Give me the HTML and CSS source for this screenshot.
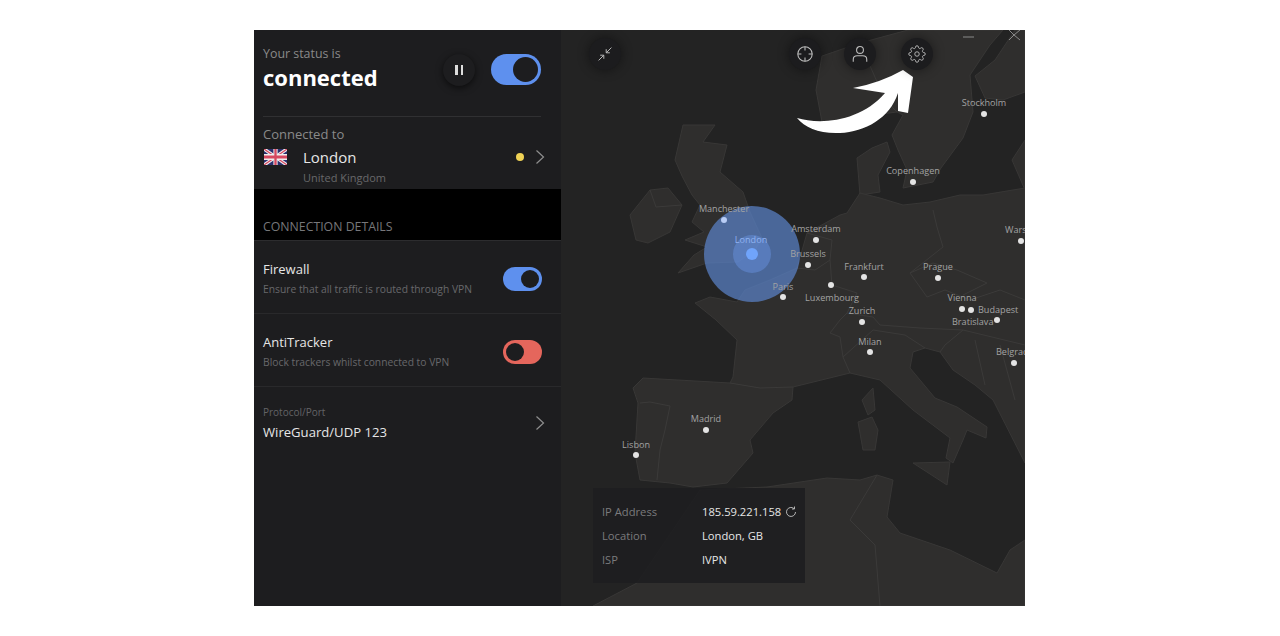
FILE: index.html
```html
<!DOCTYPE html>
<html lang="en">
<head>
  <meta charset="UTF-8" />
  <title>IVPN - connected</title>
  <link rel="stylesheet" href="styles.css">
</head>
<body>

<div class="window">

  <!-- Left panel -->
  <div class="panel">
    <div class="status">
      <div class="status-inner">
        <div class="status-text">
          <div class="status-small">Your status is</div>
          <div class="status-big">connected</div>
        </div>
        <div class="pause-btn"><span></span><span></span></div>
        <div class="toggle toggle-big"><div class="knob"></div></div>
      </div>
    </div>

    <div class="server">
      <div class="server-label">Connected to</div>
      <div class="server-row">
        <svg class="flag" viewBox="0 0 60 30" preserveAspectRatio="none">
          <rect width="60" height="30" fill="#2a2f6e"/>
          <path d="M0 0L60 30M60 0L0 30" stroke="#eee" stroke-width="7"/>
          <path d="M0 0L60 30M60 0L0 30" stroke="#d6485f" stroke-width="2.5"/>
          <path d="M30 0V30M0 15H60" stroke="#eee" stroke-width="11"/>
          <path d="M30 0V30M0 15H60" stroke="#d6485f" stroke-width="6"/>
        </svg>
        <div class="server-city">London</div>
        <div class="yellow-dot"></div>
        <svg class="chevron" viewBox="0 0 10 16"><path d="M1.5 1.5L8.5 8L1.5 14.5"/></svg>
      </div>
      <div class="server-country">United Kingdom</div>
    </div>

    <div class="band">CONNECTION DETAILS</div>

    <div class="detail-row">
      <div>
        <div class="detail-title">Firewall</div>
        <div class="detail-desc">Ensure that all traffic is routed through VPN</div>
      </div>
      <div class="toggle"><div class="knob"></div></div>
    </div>

    <div class="detail-row">
      <div>
        <div class="detail-title">AntiTracker</div>
        <div class="detail-desc">Block trackers whilst connected to VPN</div>
      </div>
      <div class="toggle toggle-red"><div class="knob"></div></div>
    </div>

    <div class="protocol">
      <div>
        <div class="protocol-label">Protocol/Port</div>
        <div class="detail-title">WireGuard/UDP 123</div>
      </div>
      <svg class="chevron" viewBox="0 0 10 16"><path d="M1.5 1.5L8.5 8L1.5 14.5"/></svg>
    </div>
  </div>

  <!-- Map -->
  <div class="map">
    <svg class="map-svg" viewBox="561 30 464 576">
      <g class="geo">
        <!-- Norway, Sweden, Finland -->
        <path class="land" d="M908 30L860 43L822 56L816 90L822 122L850 118L897 112L903 115L892 135L898 150L907 170L903 188L933 182L941 168L963 138L973 112L970 75L990 45L1003 30Z"/>
        <path class="land" d="M1025 30L1015 30L995 60L975 76L985 98L1003 100L1025 92Z"/>
        <path class="land" d="M1025 140L1012 160L1025 190Z"/>
        <path class="border" d="M860 43L885 100L897 112"/>
        <!-- Great Britain -->
        <path class="land" d="M683 125L715 125L703 142L727 145L720 172L743 192L750 212L762 238L755 250L738 262L707 263L678 273L694 255L707 247L685 240L704 232L692 222L700 205L692 195L682 176L675 160Z"/>
        <!-- Ireland -->
        <path class="land" d="M630 215L650 190L668 188L682 205L670 232L648 243L636 240Z"/>
        <path class="border" d="M650 190L656 207L682 205"/>
        <!-- Denmark -->
        <path class="land" d="M857 158L872 148L887 142L890 152L878 175L880 192L860 195Z"/>
        <!-- Mainland Europe -->
        <path class="land" d="M695 303L710 297L737 302L745 290L770 280L797 268L807 233L840 215L847 213L860 193L880 198L903 205L930 202L960 195L983 195L1025 188V463L993 400L975 385L953 370L940 352L925 348L913 352L910 368L935 398L957 407L987 427L986 438L967 430L963 440L953 463L946 458L950 438L913 410L880 380L850 373L793 387L792 400L773 413L750 440L753 453L727 483L693 487L670 483L640 480L635 453L638 403L633 388L643 378L730 383L733 377L737 340L716 320Z"/>
        <!-- Corsica, Sardinia, Sicily -->
        <path class="land" d="M862 400L873 388L875 410L868 415Z"/>
        <path class="land" d="M858 422L872 417L878 430L875 450L863 450Z"/>
        <path class="land" d="M913 463L950 462L947 485Z"/>
        <!-- North Africa -->
        <path class="land" d="M767 487L827 478L860 480L877 475L893 480L887 517L900 533L950 550L997 573L1010 550L1025 540V606H593L637 583L700 490Z"/>
        <!-- Borders -->
        <path class="border" d="M797 268L815 270L830 260L832 285L857 293L847 313L840 320L830 333L840 337L843 357L850 373"/>
        <path class="border" d="M807 233L832 240L830 260"/>
        <path class="border" d="M933 210L937 227L943 247L910 273L927 297L945 290L970 300L1000 290L1025 300"/>
        <path class="border" d="M847 313L873 317L880 325L920 328L963 330L1025 345"/>
        <path class="border" d="M843 357L873 330L905 335L925 348"/>
        <path class="border" d="M963 330L945 345L940 352M975 340L985 385M1000 345L1015 400"/>
        <path class="border" d="M910 273L933 263L957 270L987 283L963 295"/>
        <path class="border" d="M640 403L650 402L670 406L665 430L660 450L657 480"/>
        <path class="border" d="M730 383L760 388L793 387"/>
        <path class="border" d="M877 475L850 520L875 545L880 606"/>
      </g>

      <!-- London signal -->
      <circle cx="752" cy="254" r="48" fill="#5a82c8" fill-opacity="0.72"/>
      <circle cx="752" cy="254" r="19" fill="#6f9cee" fill-opacity="0.4"/>

      <text x="984" y="106" text-anchor="middle">Stockholm</text>
      <text x="913" y="174" text-anchor="middle">Copenhagen</text>
      <text x="724" y="212" text-anchor="middle">Manchester</text>
      <text x="751" y="243" text-anchor="middle" class="london-label">London</text>
      <text x="816" y="232" text-anchor="middle">Amsterdam</text>
      <text x="808" y="257" text-anchor="middle">Brussels</text>
      <text x="864" y="270" text-anchor="middle">Frankfurt</text>
      <text x="938" y="270" text-anchor="middle">Prague</text>
      <text x="1005" y="233">Warsaw</text>
      <text x="832" y="301" text-anchor="middle">Luxembourg</text>
      <text x="783" y="290" text-anchor="middle">Paris</text>
      <text x="862" y="314" text-anchor="middle">Zurich</text>
      <text x="962" y="301" text-anchor="middle">Vienna</text>
      <text x="978" y="313">Budapest</text>
      <text x="952" y="325">Bratislava</text>
      <text x="870" y="345" text-anchor="middle">Milan</text>
      <text x="996" y="355">Belgrade</text>
      <text x="706" y="422" text-anchor="middle">Madrid</text>
      <text x="636" y="448" text-anchor="middle">Lisbon</text>

      <g class="pins">
        <circle cx="984" cy="114" r="3"/><circle cx="913" cy="182" r="3"/>
        <circle cx="816" cy="240" r="3"/><circle cx="808" cy="265" r="3"/>
        <circle cx="864" cy="277" r="3"/><circle cx="938" cy="278" r="3"/>
        <circle cx="1021" cy="241" r="3"/><circle cx="831" cy="285" r="3"/>
        <circle cx="783" cy="297" r="3"/><circle cx="862" cy="322" r="3"/>
        <circle cx="962" cy="309" r="3"/><circle cx="971" cy="310" r="3"/>
        <circle cx="997" cy="320" r="3"/><circle cx="870" cy="352" r="3"/>
        <circle cx="1014" cy="363" r="3"/><circle cx="706" cy="430" r="3"/>
        <circle cx="636" cy="455" r="3"/>
      </g>
      <circle cx="724" cy="220" r="3" fill="#b9cdf5"/>
      <circle cx="752" cy="254" r="6" fill="#70a4fb"/>

      <!-- Window controls -->
      <path class="win-ctl" d="M963 37H974M1009 30L1014 35L1020 30M1014 35L1009 40M1014 35L1020 40" stroke-width="1"/>

      <!-- Arrow -->
      <path d="M797 118C820 125 860 122 885 93L853 88Q880 83 903 70L913 77L908 113L898 111L898 93C890 118 865 132 840 133C820 134 805 128 797 118Z" fill="#fff"/>
    </svg>

    <div class="round-btn btn-compress">
      <svg viewBox="0 0 20 20"><path d="M18 2L11.5 8.500M11.500 4V8.500H16M2 18L8.500 11.500M4 11.500H8.500V16"/></svg>
    </div>
    <div class="round-btn btn-target">
      <svg viewBox="0 0 20 20"><circle cx="10" cy="10" r="8"/><path d="M10 2V6M10 14V18M2 10H6M14 10H18"/></svg>
    </div>
    <div class="round-btn btn-user">
      <svg viewBox="0 0 20 20"><circle cx="10" cy="5.500" r="3.800"/><path d="M2.500 18.500V16C2.500 13.500 4.500 12 7 12H13C15.500 12 17.500 13.500 17.500 16V18.500"/></svg>
    </div>
    <div class="round-btn btn-gear">
      <svg viewBox="0 0 24 24"><circle cx="12" cy="12" r="3"/><path d="M19.400 15a1.650 1.650 0 0 0 .33 1.820l.06.06a2 2 0 1 1-2.830 2.830l-.06-.06a1.650 1.650 0 0 0-1.820-.33 1.650 1.650 0 0 0-1 1.510V21a2 2 0 1 1-4 0v-.09a1.650 1.650 0 0 0-1.080-1.510 1.650 1.650 0 0 0-1.820.33l-.06.06a2 2 0 1 1-2.830-2.830l.06-.06a1.650 1.650 0 0 0 .33-1.820 1.650 1.650 0 0 0-1.510-1H3a2 2 0 1 1 0-4h.09a1.650 1.650 0 0 0 1.510-1.080 1.650 1.650 0 0 0-.33-1.820l-.06-.06a2 2 0 1 1 2.830-2.830l.06.06a1.650 1.650 0 0 0 1.820.33h.08a1.650 1.650 0 0 0 1-1.510V3a2 2 0 1 1 4 0v.09a1.650 1.650 0 0 0 1 1.510 1.650 1.650 0 0 0 1.820-.33l.06-.06a2 2 0 1 1 2.830 2.830l-.06.06a1.650 1.650 0 0 0-.33 1.820v.08a1.650 1.650 0 0 0 1.510 1H21a2 2 0 1 1 0 4h-.09a1.650 1.650 0 0 0-1.510 1z"/></svg>
    </div>

    <!-- IP info -->
    <div class="ip-box">
      <div class="ip-label">IP Address</div>
      <div class="ip-value">185.59.221.158
        <svg class="refresh" viewBox="0 0 12 12"><path d="M10.500 6A4.500 4.500 0 1 1 9 2.600M9.500 0.500V3H7"/></svg>
      </div>
      <div class="ip-label">Location</div>
      <div class="ip-value">London, GB</div>
      <div class="ip-label">ISP</div>
      <div class="ip-value">IVPN</div>
    </div>
  </div>
</div>

</body>
</html>
```
FILE: styles.css
```css
body {
  margin: 0;
  background: white;
  font-family: "Open Sans", sans-serif;
}

.window {
  width: 771px;
  height: 576px;
  margin: 30px 0 0 254px;
  display: flex;
  overflow: hidden;
}

/* Left panel */
.panel {
  width: 307px;
  flex: none;
  background: #1d1d1f;
  display: flex;
  flex-direction: column;
}

.status {
  height: 87px;
  padding: 0 20px 0 9px;
  box-sizing: border-box;
}

.status-inner {
  height: 87px;
  box-sizing: border-box;
  border-bottom: 1px solid #303032;
  display: flex;
  align-items: center;
  padding: 0 0 7px 0;
}

.status-text {
  flex: 1;
  margin-bottom: 4px;
}

.status-small {
  font-size: 12.400px;
  color: #8a8a8a;
  line-height: 18px;
}

.status-big {
  font-size: 22px;
  font-weight: 700;
  color: white;
  line-height: 28px;
}

.pause-btn {
  width: 32px;
  height: 32px;
  border-radius: 50%;
  background: #1d1d1f;
  box-shadow: 0 2px 7px rgba(0,0,0,0.6);
  display: flex;
  justify-content: center;
  align-items: center;
  gap: 3px;
  margin-right: 16px;
}

.pause-btn span {
  width: 2.500px;
  height: 10px;
  background: #ddd;
}

.toggle {
  width: 39px;
  height: 24px;
  border-radius: 12px;
  background: #5e90ee;
  box-sizing: border-box;
  padding: 3px;
  display: flex;
  justify-content: flex-end;
  flex: none;
}

.toggle .knob {
  width: 18px;
  height: 18px;
  border-radius: 50%;
  background: #1d1d1f;
}

.toggle-big {
  width: 50px;
  height: 31px;
  border-radius: 16px;
}

.toggle-big .knob {
  width: 25px;
  height: 25px;
}

.toggle-red {
  background: #e5665c;
  justify-content: flex-start;
}

.server {
  height: 72px;
  box-sizing: border-box;
  padding: 8px 16px 0 9px;
}

.server-label {
  font-size: 13px;
  line-height: 18px;
  color: #8a8a8a;
}

.server-row {
  display: flex;
  align-items: center;
  height: 28px;
}

.flag {
  width: 23px;
  height: 16px;
  margin: 0 16px 0 1px;
  flex: none;
}

.server-city {
  flex: 1;
  font-size: 15px;
  color: #e6e6e6;
}

.yellow-dot {
  width: 8px;
  height: 8px;
  border-radius: 50%;
  background: #efd255;
  margin-right: 11px;
}

.chevron {
  width: 10px;
  height: 16px;
  fill: none;
  stroke: #8f8f8f;
  stroke-width: 1.200;
}

.server-country {
  font-size: 11px;
  line-height: 13px;
  color: #68686a;
  padding-left: 40px;
}

.band {
  height: 52px;
  background: black;
  box-sizing: border-box;
  border-bottom: 1px solid #2c2c2e;
  padding: 28px 0 0 9px;
  font-size: 12.300px;
  line-height: 19px;
  color: #77777a;
}

.detail-row {
  height: 73px;
  box-sizing: border-box;
  padding: 18px 19px 0 9px;
  border-bottom: 1px solid #29292b;
  display: flex;
  justify-content: space-between;
  align-items: flex-start;
}

.detail-row .toggle {
  margin-top: 8px;
}

.detail-title {
  font-size: 13px;
  line-height: 20px;
  color: #e6e6e6;
}

.detail-desc {
  font-size: 10.300px;
  line-height: 20px;
  color: #68686b;
}

.protocol {
  padding: 17px 16px 0 9px;
  display: flex;
  justify-content: space-between;
  align-items: center;
}

.protocol .detail-title {
  font-size: 13.100px;
  margin-top: 2px;
}

.protocol-label {
  font-size: 10px;
  line-height: 16px;
  color: #636366;
}

/* Map */
.map {
  position: relative;
  flex: 1;
  background: #232323;
  overflow: hidden;
}

.map-svg {
  display: block;
  width: 464px;
  height: 576px;
}

.geo {
  filter: blur(0.6px);
}

.land {
  fill: #2f2e2d;
  stroke: #383736;
  stroke-width: 1;
  stroke-linejoin: round;
}

.border {
  fill: none;
  stroke: #3b3a39;
  stroke-width: 1;
  stroke-linejoin: round;
}

.map-svg text {
  font-family: "Open Sans", sans-serif;
  font-size: 9.100px;
  fill: #a3a3a3;
}

.map-svg .london-label {
  fill: #8fb2f0;
}

.pins circle {
  fill: #e4e4e4;
}

.win-ctl {
  stroke: #8a8a8a;
  fill: none;
}

.round-btn {
  position: absolute;
  top: 8px;
  width: 32px;
  height: 32px;
  border-radius: 50%;
  background: #1c1c1e;
  box-shadow: 0 0 12px rgba(0,0,0,0.45);
  display: flex;
  justify-content: center;
  align-items: center;
}

.round-btn svg {
  width: 18px;
  height: 18px;
  fill: none;
  stroke: #bdbdbd;
  stroke-width: 1.200;
}

.btn-compress { left: 28px; }
.btn-target { left: 228px; }
.btn-user { left: 283px; }
.btn-gear { left: 340px; }

.btn-compress svg { width: 16px; height: 16px; }

.ip-box {
  position: absolute;
  left: 32px;
  top: 458px;
  width: 212px;
  height: 95px;
  box-sizing: border-box;
  padding: 12px 9px;
  background: rgba(30,30,32,0.9);
  display: grid;
  grid-template-columns: 100px 1fr;
  grid-auto-rows: 24px;
  font-size: 11.200px;
  line-height: 24px;
}

.ip-label {
  color: #7b7b7d;
}

.ip-value {
  color: #e6e6e6;
  display: flex;
  align-items: center;
  gap: 4px;
}

.refresh {
  width: 12px;
  height: 12px;
  fill: none;
  stroke: #b5b5b5;
  stroke-width: 1;
}
```
